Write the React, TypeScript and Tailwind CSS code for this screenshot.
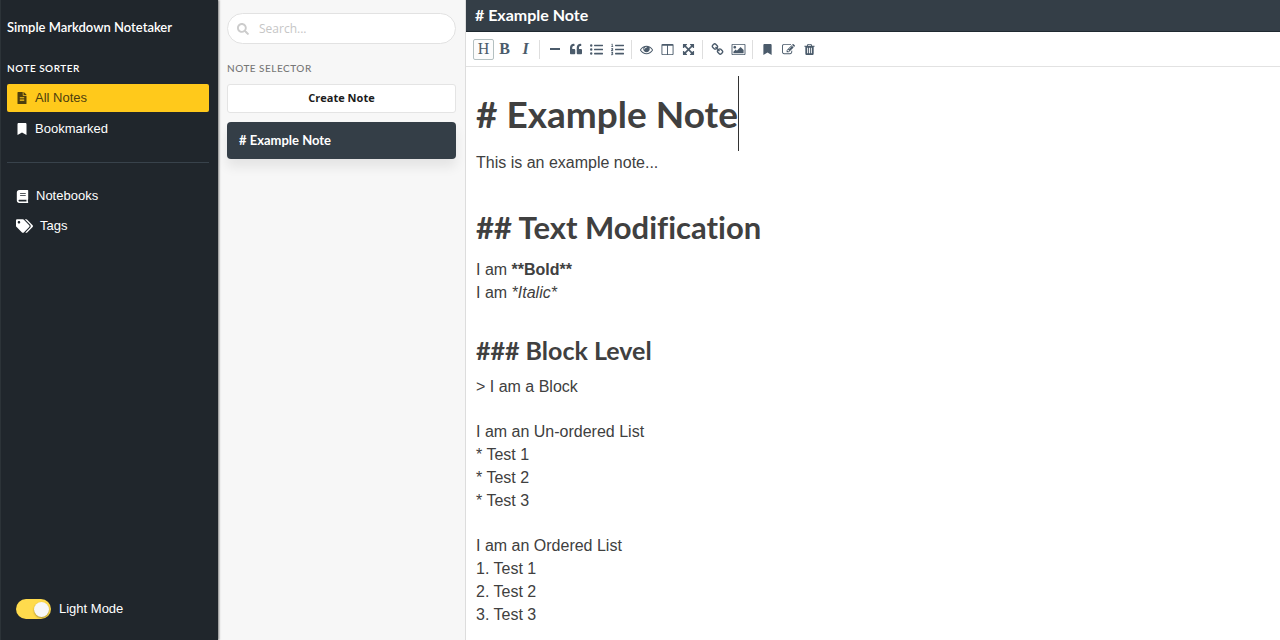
import type { ReactNode } from 'react';
import { FaBook, FaBookmark, FaFileAlt, FaListOl, FaListUl, FaQuoteLeft, FaSearch, FaTags } from 'react-icons/fa';

const paths = {
  eye: 'M1664 960q-152-236-381-353 61 104 61 225 0 185-131.5 316.5t-316.5 131.5-316.5-131.5-131.5-316.5q0-121 61-225-229 117-381 353 133 205 333.5 326.5t434.5 121.5 434.5-121.5 333.5-326.5zm-720-384q0-20-14-34t-34-14q-125 0-214.5 89.5t-89.5 214.5q0 20 14 34t34 14 34-14 14-34q0-86 61-147t147-61q20 0 34-14t14-34zm848 384q0 34-20 69-140 230-376.5 368.5t-499.5 138.5-499.5-139-376.5-368q-20-35-20-69t20-69q140-229 376.5-368t499.5-139 499.5 139 376.5 368q20 35 20 69z',
  columns: 'M224 1536h608v-1152h-640v1120q0 13 9.5 22.5t22.5 9.5zm1376-32v-1120h-640v1152h608q13 0 22.5-9.5t9.5-22.5zm128-1216v1216q0 66-47 113t-113 47h-1344q-66 0-113-47t-47-113v-1216q0-66 47-113t113-47h1344q66 0 113 47t47 113z',
  arrows: 'M1411 541l-355 355 355 355 144-144q29-31 70-14 39 17 39 59v448q0 26-19 45t-45 19h-448q-42 0-59-40-17-39 14-69l144-144-355-355-355 355 144 144q31 30 14 69-17 40-59 40h-448q-26 0-45-19t-19-45v-448q0-42 40-59 39-17 69 14l144 144 355-355-355-355-144 144q-19 19-45 19-12 0-24-5-40-17-40-59v-448q0-26 19-45t45-19h448q42 0 59 40 17 39-14 69l-144 144 355 355 355-355-144-144q-31-30-14-69 17-40 59-40h448q26 0 45 19t19 45v448q0 42-39 59-13 5-25 5-26 0-45-19z',
  link: 'M1520 1216q0-40-28-68l-208-208q-28-28-68-28-42 0-72 32 3 3 19 18.5t21.5 21.5 15 19 13 25.5 3.5 27.5q0 40-28 68t-68 28q-15 0-27.5-3.5t-25.5-13-19-15-21.5-21.5-18.5-19q-33 31-33 73 0 40 28 68l206 207q27 27 68 27 40 0 68-26l147-146q28-28 28-67zm-703-705q0-40-28-68l-206-207q-28-28-68-28-39 0-68 27l-147 146q-28 28-28 67 0 40 28 68l208 208q27 27 68 27 42 0 72-31-3-3-19-18.5t-21.5-21.5-15-19-13-25.5-3.5-27.5q0-40 28-68t68-28q15 0 27.5 3.5t25.5 13 19 15 21.5 21.5 18.5 19q33-31 33-73zm895 705q0 120-85 203l-147 146q-83 83-203 83-121 0-204-85l-206-207q-83-83-83-203 0-123 88-209l-88-88q-86 88-208 88-120 0-204-84l-208-208q-84-84-84-204t85-203l147-146q83-83 203-83 121 0 204 85l206 207q83 83 83 203 0 123-88 209l88 88q86-88 208-88 120 0 204 84l208 208q84 84 84 204z',
  edit: 'M888 1184l116-116-152-152-116 116v56h96v96h56zm440-720q-16-16-33 1l-350 350q-17 17-1 33t33-1l350-350q17-17 1-33zm80 594v190q0 119-84.5 203.5t-203.5 84.5h-832q-119 0-203.5-84.5t-84.5-203.5v-832q0-119 84.5-203.5t203.5-84.5h832q63 0 117 25 15 7 18 23 3 17-9 29l-49 49q-14 14-32 8-23-6-45-6h-832q-66 0-113 47t-47 113v832q0 66 47 113t113 47h832q66 0 113-47t47-113v-126q0-13 9-22l64-64q15-15 35-7t20 29zm-96-738l288 288-672 672h-288v-288zm444 132l-92 92-288-288 92-92q28-28 68-28t68 28l152 152q28 28 28 68t-28 68z',
  trash: 'M704 1376v-704q0-14-9-23t-23-9h-64q-14 0-23 9t-9 23v704q0 14 9 23t23 9h64q14 0 23-9t9-23zm256 0v-704q0-14-9-23t-23-9h-64q-14 0-23 9t-9 23v704q0 14 9 23t23 9h64q14 0 23-9t9-23zm256 0v-704q0-14-9-23t-23-9h-64q-14 0-23 9t-9 23v704q0 14 9 23t23 9h64q14 0 23-9t9-23zm-544-992h448l-48-117q-7-9-17-11h-317q-10 2-17 11zm928 32v64q0 14-9 23t-23 9h-96v948q0 83-47 143.5t-113 60.5h-832q-66 0-113-58.5t-47-141.5v-952h-96q-14 0-23-9t-9-23v-64q0-14 9-23t23-9h309l70-167q15-37 54-63t79-26h320q40 0 79 26t54 63l70 167h309q14 0 23 9t9 23z',
  picture: 'M704 576q0 80-56 136t-136 56-136-56-56-136 56-136 136-56 136 56 56 136zm1024 384v448h-1408v-192l320-320 160 160 512-512zm96-704h-1600q-13 0-22.5 9.5t-9.5 22.5v1216q0 13 9.5 22.5t22.5 9.5h1600q13 0 22.5-9.5t9.5-22.5v-1216q0-13-9.5-22.5t-22.5-9.5zm160 32v1216q0 66-47 113t-113 47h-1600q-66 0-113-47t-47-113v-1216q0-66 47-113t113-47h1600q66 0 113 47t47 113z',
};

function Glyph({ name }: { name: keyof typeof paths }) {
  const wide = name === 'picture';
  return (
    <svg viewBox={wide ? '0 0 2048 1792' : '0 0 1792 1792'} className={wide ? 'h-[13px] w-[15px]' : 'size-[13px]'} fill="currentColor" aria-hidden="true">
      <path d={paths[name]} />
    </svg>
  );
}

function Tool({ label, active, children }: { label: string; active?: boolean; children: ReactNode }) {
  return (
    <button
      type="button"
      aria-label={label}
      aria-pressed={active}
      className={`flex h-[21px] w-[21px] items-center justify-center rounded-[2px] font-['Liberation_Serif',serif] text-base leading-none ${active ? 'border border-[#b4c0c1] bg-[#fcfcfc]' : ''}`}
    >
      {children}
    </button>
  );
}

function Separator() {
  return <span className="mr-[4px] ml-[3px] h-[19px] w-px bg-[#dedede]" />;
}

function NavLink({ icon, label, active }: { icon: ReactNode; label: string; active?: boolean }) {
  return (
    <a
      href="#"
      className={`flex h-[28px] items-center rounded-[2px] pl-[9px] text-[13px] ${active ? 'bg-[#ffc91b] text-[#4d3e0e]' : 'text-white'}`}
    >
      {icon}
      <span className="ml-[7px]">{label}</span>
    </a>
  );
}

function Line({ children }: { children?: ReactNode }) {
  return <p className={children ? 'h-[23px] leading-[23px]' : 'h-[22px]'}>{children}</p>;
}

export default function App() {
  return (
    <div className="flex min-h-screen bg-white font-['Liberation_Sans',Arial,sans-serif] text-[#404040]">
      <aside className="z-10 flex w-[218px] shrink-0 flex-col border-l border-[#2c3338] bg-[#20262c] pr-[9px] pl-[6px] text-white shadow-[1px_0_2px_rgba(0,0,0,0.5)]">
        <h1 className="mt-[17px] font-['Lato',sans-serif] text-[13px] leading-[20px] font-semibold">Simple Markdown Notetaker</h1>
        <h2 className="mt-[24px] font-['Lato',sans-serif] text-[10px] leading-[14px] font-semibold tracking-wider uppercase">Note Sorter</h2>
        <nav className="mt-[9px] flex flex-col">
          <NavLink active icon={<FaFileAlt className="size-[12px]" />} label="All Notes" />
          <div className="mt-[3px]">
            <NavLink icon={<FaBookmark className="size-[12px]" />} label="Bookmarked" />
          </div>
          <hr className="my-[19px] border-[#38424b]" />
          <NavLink icon={<FaBook className="size-[13px]" />} label="Notebooks" />
          <div className="mt-[2px]">
            <NavLink icon={<FaTags className="h-[14px] w-[17px]" />} label="Tags" />
          </div>
        </nav>
        <label className="mt-auto mb-[20px] ml-[9px] flex items-center gap-[8px] text-[13px] leading-[22px]">
          <input type="checkbox" role="switch" defaultChecked className="peer sr-only" />
          <span className="flex h-[20px] w-[35px] items-center justify-end rounded-full bg-[#ffdb4d] pr-[2px]">
            <span className="size-[15px] rounded-full bg-[#f7f7f7] shadow-[0_1px_2px_rgba(0,0,0,0.35)]" />
          </span>
          Light Mode
        </label>
      </aside>

      <section className="w-[247px] shrink-0 bg-[#f7f7f7] pr-[9px] pl-[9px]">
        <label className="mt-[13px] flex h-[31px] items-center rounded-full border border-[#e2e2e2] bg-white pl-[9px]">
          <FaSearch className="size-[12px] shrink-0 text-[#cccccc]" aria-hidden="true" />
          <input
            type="search"
            aria-label="Search notes"
            placeholder="Search..."
            className="ml-[10px] w-full min-w-0 bg-transparent font-['Open_Sans',sans-serif] text-[12px] outline-none placeholder:text-[#c6c6c6]"
          />
        </label>
        <h2 className="mt-[17px] font-['Lato',sans-serif] text-[10px] leading-[14px] font-medium tracking-wider text-[#777777] uppercase">Note Selector</h2>
        <button type="button" className="mt-[9px] flex h-[29px] w-full items-center justify-center rounded-[3px] border border-[#e4e4e4] bg-white font-['Open_Sans',sans-serif] text-[11px] font-bold text-[#1b1b1b]">
          Create Note
        </button>
        <button type="button" className="mt-[9px] flex h-[37px] w-full items-center rounded-[4px] bg-[#343e47] pl-[12px] font-['Lato',sans-serif] text-[13px] font-bold text-white shadow-[0_8px_12px_rgba(0,0,0,0.08)]">
          # Example Note
        </button>
      </section>

      <main className="flex min-w-0 flex-1 flex-col border-l border-[#dddddd]">
        <header className="flex h-[32px] items-center border-b border-[#1f2930] bg-[#343e47] pb-[2px] pl-[9px] font-['Lato',sans-serif] text-[16px] font-bold text-white">
          # Example Note
        </header>
        <div role="toolbar" aria-label="Formatting" className="flex h-[35px] items-center border-b border-[#e2e2e2] pl-[7px] text-[#4b5b6b]">
          <Tool label="Heading" active>H</Tool>
          <Tool label="Bold"><b>B</b></Tool>
          <Tool label="Italic"><i className="font-bold">I</i></Tool>
          <Separator />
          <Tool label="Horizontal rule"><span className="h-[2px] w-[10px] bg-current" /></Tool>
          <Tool label="Quote"><FaQuoteLeft className="size-[12px]" /></Tool>
          <Tool label="Bulleted list"><FaListUl className="size-[13px]" /></Tool>
          <Tool label="Numbered list"><FaListOl className="size-[13px]" /></Tool>
          <Separator />
          <Tool label="Preview"><Glyph name="eye" /></Tool>
          <Tool label="Side by side"><Glyph name="columns" /></Tool>
          <Tool label="Fullscreen"><Glyph name="arrows" /></Tool>
          <Separator />
          <Tool label="Link"><Glyph name="link" /></Tool>
          <Tool label="Image"><Glyph name="picture" /></Tool>
          <Separator />
          <Tool label="Bookmark"><FaBookmark className="size-[11px]" /></Tool>
          <Tool label="Rename"><Glyph name="edit" /></Tool>
          <Tool label="Delete"><Glyph name="trash" /></Tool>
        </div>
        <div
          role="textbox"
          aria-multiline="true"
          aria-label="Note text"
          contentEditable
          suppressContentEditableWarning
          className="flex-1 pt-[9px] pl-[10px] text-[16px] outline-none [font-variant-ligatures:none]"
        >
          <h2 className="flex h-[75px] items-center font-['Lato',sans-serif] text-[37px] font-bold">
            # Example Note
            <span className="h-full w-px bg-[#333333]" />
          </h2>
          <Line>This is an example note...</Line>
          <Line />
          <h3 className="h-[62px] font-['Lato',sans-serif] text-[31px] leading-[62px] font-bold">## Text Modification</h3>
          <Line>I am <b>**Bold**</b></Line>
          <Line>I am <i>*Italic*</i></Line>
          <Line />
          <h4 className="h-[49px] font-['Lato',sans-serif] text-[25px] leading-[49px] font-bold">### Block Level</h4>
          <Line>&gt; I am a Block</Line>
          <Line />
          <Line>I am an Un-ordered List</Line>
          <Line>* Test 1</Line>
          <Line>* Test 2</Line>
          <Line>* Test 3</Line>
          <Line />
          <Line>I am an Ordered List</Line>
          <Line>1. Test 1</Line>
          <Line>2. Test 2</Line>
          <Line>3. Test 3</Line>
        </div>
      </main>
    </div>
  );
}
